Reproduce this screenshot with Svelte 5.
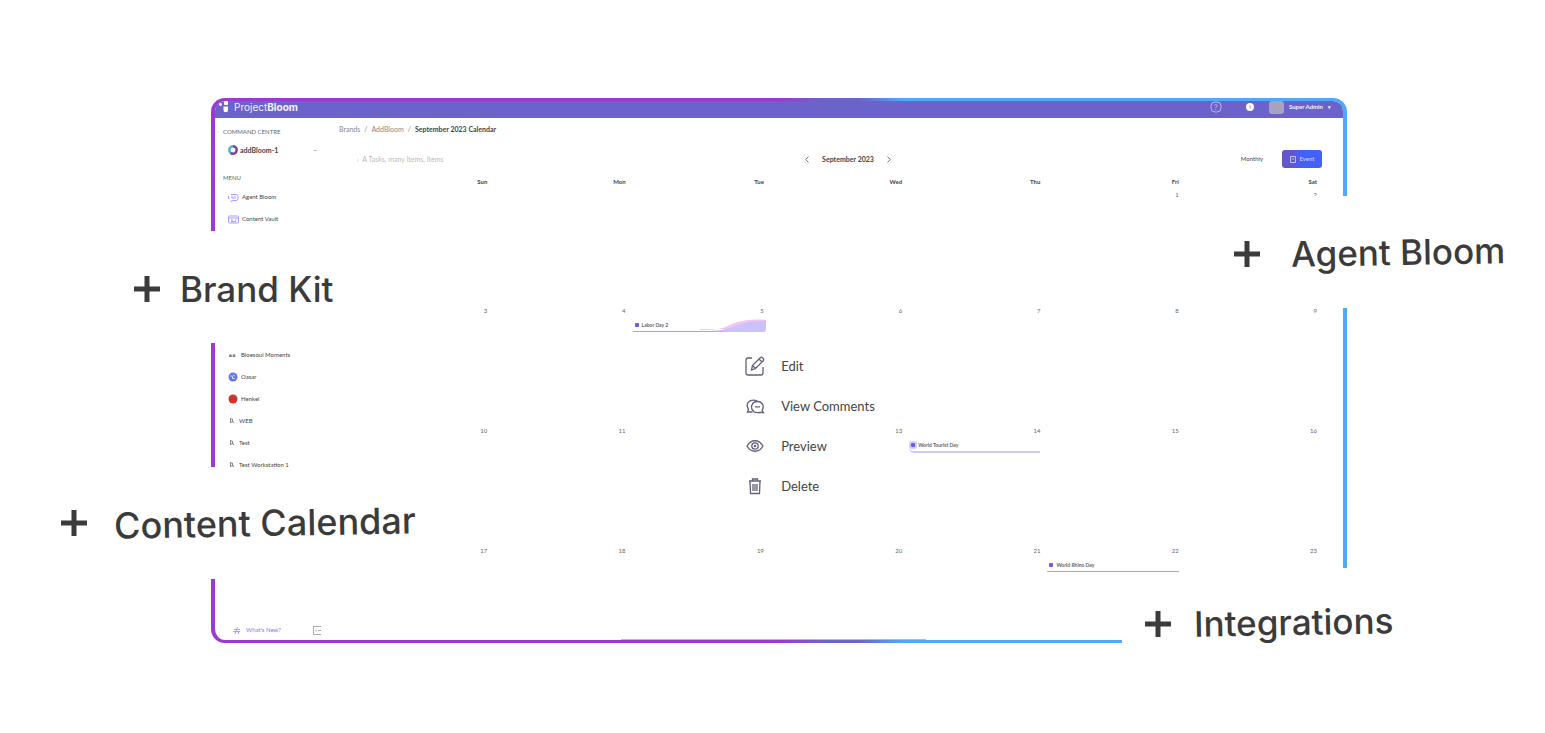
<script>
  const menu = [
    { label: 'Agent Bloom', icon: 'agent' },
    { label: 'Content Vault', icon: 'vault' }
  ];

  const workspaces = [
    { label: 'Bloesoul Moments', icon: 'people' },
    { label: 'Oasar', icon: 'blue' },
    { label: 'Henkel', icon: 'red' },
    { label: 'WEB', icon: 'flag' },
    { label: 'Test', icon: 'flag' },
    { label: 'Test Workstation 1', icon: 'flag' }
  ];

  const weekdays = ['Sun', 'Mon', 'Tue', 'Wed', 'Thu', 'Fri', 'Sat'];

  const weeks = [
    ['', '', '', '', '', '1', '2'],
    ['3', '4', '5', '6', '7', '8', '9'],
    ['10', '11', '', '13', '14', '15', '16'],
    ['17', '18', '19', '20', '21', '22', '23']
  ];

  const events = {
    5: { title: 'Labor Day 2', kind: 'trend' },
    14: { title: 'World Tourist Day', kind: 'lilac' },
    22: { title: 'World Rhino Day', kind: 'plain' }
  };

  const actions = ['Edit', 'View Comments', 'Preview', 'Delete'];

  const callouts = [
    { label: 'Brand Kit', name: 'kit' },
    { label: 'Content Calendar', name: 'content' },
    { label: 'Agent Bloom', name: 'agent' },
    { label: 'Integrations', name: 'integrations' }
  ];
</script>

<div class="stage">
  <div class="frame">
    <header class="topbar">
      <svg class="logo" width="10" height="12" viewBox="0 0 10 12" fill="#fff">
        <circle cx="1.5" cy="3.5" r="1.4" />
        <rect x="5" y="0" width="4" height="4" rx="1" />
        <path d="M4.5 5.5h4.5v3.500a2.200 2.200 0 0 1-4.500 0z" />
      </svg>
      <span class="brand">Project<b>Bloom</b></span>
      <button class="icon-button help" aria-label="Help">
        <svg width="12" height="12" viewBox="0 0 12 12" fill="none" stroke="#b9b4ee">
          <rect x="1" y="1" width="10" height="10" rx="4" />
          <path d="M4.500 4.500c.3-1.500 3-1.300 2.700.2-.2 1-1.400.9-1.400 2.300M5.800 8v1" />
        </svg>
      </button>
      <button class="icon-button" aria-label="Notifications">
        <svg width="8" height="8" viewBox="0 0 8 8">
          <circle cx="4" cy="4" r="4" fill="#fff" />
          <path d="M4 2.500v2l1 .8" stroke="#9a94de" fill="none" />
        </svg>
      </button>
      <button class="user"><i class="avatar"></i>Super Admin <span class="caret">▾</span></button>
    </header>

    <aside class="sidebar">
      <h2>COMMAND CENTRE</h2>
      <button class="workspace">
        <svg width="10" height="10" viewBox="0 0 10 10" fill="none" stroke-width="2.500">
          <path d="M5 1.300a3.700 3.700 0 0 0 0 7.400" stroke="#5aaec8" />
          <path d="M5 1.300a3.700 3.700 0 0 1 3.700 3.700" stroke="#5b4fa8" />
          <path d="M8.700 5a3.700 3.700 0 0 1-6 2.900" stroke="#8d3d96" />
        </svg>
        addBloom-1
        <span class="dash">–</span>
      </button>
      <h2>MENU</h2>
      <nav>
        {#each menu as item}
          <a href="#{item.icon}">
            <svg width="11" height="9" viewBox="0 0 11 9" fill="none" stroke="#a79cff">
              {#if item.icon === 'agent'}
                <path d="M3 1.500h5a2 2 0 0 1 2 2v2a2 2 0 0 1-2 2H5l-2 1v-1M.5 3v3M3 4h2v2M7 3v3" />
              {:else}
                <rect x=".5" y="1" width="10" height="7" rx="1" />
                <path d="M.5 3h10M3 5h2M7 5h1.500M3 6.500h5" />
              {/if}
            </svg>
            {item.label}
          </a>
        {/each}
      </nav>
      <nav class="spaces">
        {#each workspaces as item}
          <a href="#workspace" class:tight={item.icon === 'flag'}>
            <svg width="10" height="10" viewBox="0 0 10 10">
              {#if item.icon === 'people'}
                <path d="M1 7c0-4 3-4 3 0zM4.500 7c0-4 3-4 3 0z" fill="#888" />
              {:else if item.icon === 'blue'}
                <circle cx="5" cy="5" r="4.500" fill="#6672f5" />
                <path d="M2 4h2.500v2.500H7M5 3l2 1" fill="none" stroke="#c8dcff" />
              {:else if item.icon === 'red'}
                <circle cx="5" cy="5" r="4.500" fill="#dc3028" />
                <path d="M1 5h8" stroke="#8d4a3e" stroke-width="1.500" />
              {:else}
                <path d="M2.500 2v5M2.500 3h2v3h-2M4.500 5l1.500 2" fill="none" stroke="#888" />
              {/if}
            </svg>
            {item.label}
          </a>
        {/each}
      </nav>
      <div class="foot">
        <a href="#news">
          <svg width="9" height="9" viewBox="0 0 9 9" fill="none" stroke="#a79cff">
            <path d="M1 5.500h7M2 3.500h6M5.500 1L3 8M6.500 5v3" />
          </svg>
          What's New?
        </a>
        <button class="icon-button" aria-label="Collapse sidebar">
          <svg width="8" height="9" viewBox="0 0 8 9" fill="none" stroke="#aaa">
            <path d="M0 .5h8M0 8.500h8M.5 1v7M3 3.500v2M5 4.500h3" />
          </svg>
        </button>
      </div>
    </aside>

    <main>
      <div class="crumbs">
        <a href="#brands">Brands</a>
        <span>/</span>
        <a href="#addbloom">AddBloom</a>
        <span>/</span>
        <b>September 2023 Calendar</b>
      </div>
      <div class="toolbar">
        <span class="hint">‹ &nbsp;A Tasks, many Items, Items</span>
        <div class="month">
          <button class="icon-button" aria-label="Previous month">
            <svg width="4" height="7" viewBox="0 0 4 7" fill="none" stroke="#777"><path d="M3.500.5L.8 3.500l2.700 3" /></svg>
          </button>
          <b>September 2023</b>
          <button class="icon-button" aria-label="Next month">
            <svg width="4" height="7" viewBox="0 0 4 7" fill="none" stroke="#777"><path d="M.5.5l2.700 3-2.700 3" /></svg>
          </button>
        </div>
        <div class="right">
          <button class="monthly">Monthly</button>
          <button class="create">
            <svg width="6" height="7" viewBox="0 0 6 7" fill="none" stroke="#c5c0ff"><path d="M.5.5h5v6h-5zM2 3h2" /></svg>
            Event
          </button>
        </div>
      </div>
      <table>
        <thead>
          <tr>
            {#each weekdays as day}<th>{day}</th>{/each}
          </tr>
        </thead>
        <tbody>
          {#each weeks as week}
            <tr>
              {#each week as date}
                <td>
                  {date}
                  {#if events[date]}
                    <div class="event {events[date].kind}">
                      <i></i>{events[date].title}
                      {#if events[date].kind === 'trend'}
                        <svg class="wave" width="66" height="14" viewBox="0 0 66 14">
                          <path d="M0 11c28 0 26-5 38-8C48 0 58 0 66 1v9H0z" fill="#f3c3f5" />
                          <path d="M8 12c24-1 24-5 34-7 8-3 16-3 24-3v8c0 2-1 3-3 3H30z" fill="#cbc2fc" />
                        </svg>
                      {/if}
                    </div>
                  {/if}
                </td>
              {/each}
            </tr>
          {/each}
        </tbody>
      </table>
    </main>

    <div class="scroll"></div>

    <div class="actions">
      {#each actions as action}
        <button>
          <svg width="20" height="20" viewBox="0 0 20 20" fill="none" stroke="#62607a" stroke-width="1.300">
            {#if action === 'Edit'}
              <path d="M7 2H3a2 2 0 0 0-2 2v13a2 2 0 0 0 2 2h13a2 2 0 0 0 2-2v-6" />
              <path d="M6.500 14l1-4.500 8-8c1-1 4 1.500 3 3l-8 8zM14 3l3 3M7.500 9.500l3 3" />
            {:else if action === 'View Comments'}
              <path d="M7.500 16H2.500l1-2.500C.5 9 3 4.500 8 4.200c2-.2 3.500.3 4.500 1.300" />
              <path d="M17 14.500c3-4.500 0-9-4.500-9-6 0-8 7-3.500 10.300 1.500 1 3.500 1 5 .7h4.500zM10 10.800h5" />
            {:else if action === 'Preview'}
              <path d="M2 10c4-7 12-7 16 0-4 7-12 7-16 0z" />
              <circle cx="10" cy="10" r="3.200" />
              <circle cx="10" cy="10" r=".6" />
            {:else}
              <path d="M4 5h12M7.500 5V3h5v2M5 5l.5 12.500h9L15 5M8 8v7M10 8v7M12 8v7" />
            {/if}
          </svg>
          {action}
        </button>
      {/each}
    </div>
  </div>

  {#each callouts as callout}
    <div class="callout {callout.name}">
      <svg width="26" height="26" viewBox="0 0 26 26" stroke="#3b3b3b" stroke-width="5">
        <path d="M0 13h26M13 0v26" />
      </svg>
      <span>{callout.label}</span>
    </div>
  {/each}
</div>

<style>
  :global(body) {
    background: #fff;
    font-family: Lato, sans-serif;
  }

  .stage {
    position: relative;
    padding: 98px 198px 88px 211px;
    overflow: hidden;
  }

  .frame {
    position: relative;
    display: grid;
    grid-template-columns: 112px 1fr;
    border: 4px solid transparent;
    border-top-width: 3px;
    border-bottom-width: 3px;
    border-radius: 14px;
    background:
      linear-gradient(#fff, #fff) padding-box,
      linear-gradient(90deg, #9c38d6 50%, #6c63cc 54%, #6c63cc 57%, #4ea9ff 61%) border-box;
    font-size: 7px;
    line-height: 10px;
    color: #444;
  }

  button {
    border: none;
    padding: 0;
    background: none;
    font: inherit;
    color: inherit;
    cursor: pointer;
  }

  a {
    color: inherit;
    text-decoration: none;
  }

  svg {
    display: block;
    flex: none;
  }

  .icon-button {
    display: flex;
  }

  .topbar {
    grid-column: 1 / 3;
    display: flex;
    align-items: center;
    height: 17px;
    box-sizing: border-box;
    padding: 0 12px 5px 4px;
    border-radius: 10px 10px 0 0;
    background: #6b63ca;
    color: #f3f1ff;
  }

  .brand {
    flex: 1;
    margin-left: 5px;
    font-family: Inter, sans-serif;
    font-size: 10px;
  }

  .help {
    margin-right: 24px;
  }

  .user {
    display: flex;
    align-items: center;
    gap: 5px;
    margin-left: 15px;
    font-size: 6px;
    font-weight: bold;
  }

  .avatar {
    width: 15px;
    height: 13px;
    border-radius: 3px;
    background: #a7a2c4;
  }

  .caret {
    font-size: 5px;
  }

  .sidebar {
    display: flex;
    flex-direction: column;
    padding: 9px 0 5px 8px;
  }

  h2 {
    margin: 0;
    font-size: 6px;
    font-weight: normal;
    line-height: 10px;
    color: #666;
  }

  .workspace {
    display: flex;
    align-items: center;
    gap: 2px;
    margin: 8px 0 18px 5px;
    font-weight: bold;
  }

  .dash {
    margin-left: 33px;
    color: #999;
  }

  .sidebar nav {
    display: grid;
    gap: 2px;
    margin: 4px 0 0 5px;
    font-size: 6px;
  }

  .sidebar nav a {
    display: flex;
    align-items: center;
    gap: 3px;
    height: 20px;
  }

  .sidebar nav.spaces {
    margin-top: 116px;
  }

  .sidebar nav a.tight {
    gap: 1px;
  }

  .foot {
    display: flex;
    align-items: center;
    justify-content: space-between;
    margin: auto 6px 0 9px;
    font-size: 6px;
    color: #8378f5;
  }

  .foot a {
    display: flex;
    align-items: center;
    gap: 5px;
  }

  main {
    padding: 6px 26px 62px 12px;
  }

  .crumbs {
    display: flex;
    gap: 4px;
    color: #888;
  }

  .crumbs b {
    color: #444;
  }

  .toolbar {
    display: grid;
    grid-template-columns: 1fr auto 1fr;
    align-items: center;
    height: 20px;
    margin-top: 15px;
  }

  .hint {
    padding-left: 18px;
    color: #bbb;
  }

  .month {
    display: flex;
    align-items: center;
    gap: 13px;
    margin-left: 40px;
  }

  .right {
    display: flex;
    align-items: center;
    justify-content: flex-end;
    gap: 19px;
    margin-right: -5px;
    font-size: 6px;
  }

  .create {
    display: flex;
    align-items: center;
    justify-content: center;
    gap: 4px;
    width: 40px;
    height: 18px;
    border-radius: 3px;
    background: linear-gradient(90deg, #6357cc 25%, #4260fa 50%);
    color: #dcd9ff;
  }

  table {
    width: calc(100% - 10px);
    margin: 8px 0 0 10px;
    table-layout: fixed;
    border-collapse: collapse;
    font-size: 6px;
    line-height: 10px;
    text-align: right;
  }

  th {
    padding: 0;
    height: 13px;
    vertical-align: top;
    text-align: right;
  }

  td {
    height: 120px;
    padding: 0;
    vertical-align: top;
    color: #666;
  }

  tbody tr:first-child td {
    height: 116px;
  }

  tbody tr:last-child td {
    height: 32px;
  }

  .event {
    position: relative;
    z-index: 1;
    display: flex;
    align-items: center;
    gap: 3px;
    height: 13px;
    margin: 2px 0 0 7px;
    padding-left: 2px;
    border-bottom: 1px solid #aaa;
    font-size: 5px;
    font-weight: bold;
    text-align: left;
  }

  .event i {
    width: 4px;
    height: 4px;
    border-radius: 1px;
    background: #6a5cf0;
  }

  .event.lilac {
    border-bottom: 2px solid #cfc8fa;
    border-radius: 5px 0 0 5px;
  }

  .event.lilac i {
    box-shadow: 0 0 0 2px #d4ccff;
  }

  .wave {
    position: absolute;
    right: -2px;
    bottom: -2px;
  }

  .scroll {
    position: absolute;
    bottom: 0;
    left: 36%;
    width: 27%;
    height: 1px;
    background: #bbb;
  }

  .actions {
    position: absolute;
    top: 245px;
    left: 47%;
    display: grid;
    gap: 4px;
    padding: 2px 12px 0 0;
    background: #fff;
  }

  .actions button {
    display: flex;
    align-items: center;
    gap: 16px;
    height: 36px;
    font-size: 13px;
    line-height: 16px;
  }

  .callout {
    position: absolute;
    display: flex;
    align-items: center;
    height: 112px;
    box-sizing: border-box;
    background: #fff;
    color: #3b3b3b;
    font-family: Inter, sans-serif;
    font-size: 35px;
    font-weight: 500;
    line-height: 44px;
    white-space: nowrap;
  }

  .callout.kit {
    top: 231px;
    left: 134px;
    gap: 20px;
    padding-top: 3px;
  }

  .callout.content {
    top: 467px;
    left: 61px;
    gap: 27px;
    font-size: 36px;
  }

  .callout.agent {
    top: 196px;
    right: 40px;
    gap: 31px;
    padding-top: 4px;
  }

  .callout.integrations {
    top: 568px;
    right: 152px;
    gap: 23px;
    padding-left: 23px;
  }

  .callout.content span,
  .callout.agent span,
  .callout.integrations span {
    transform: rotate(-1deg);
  }

  .callout.agent span,
  .callout.integrations span {
    padding-bottom: 5px;
  }
</style>
